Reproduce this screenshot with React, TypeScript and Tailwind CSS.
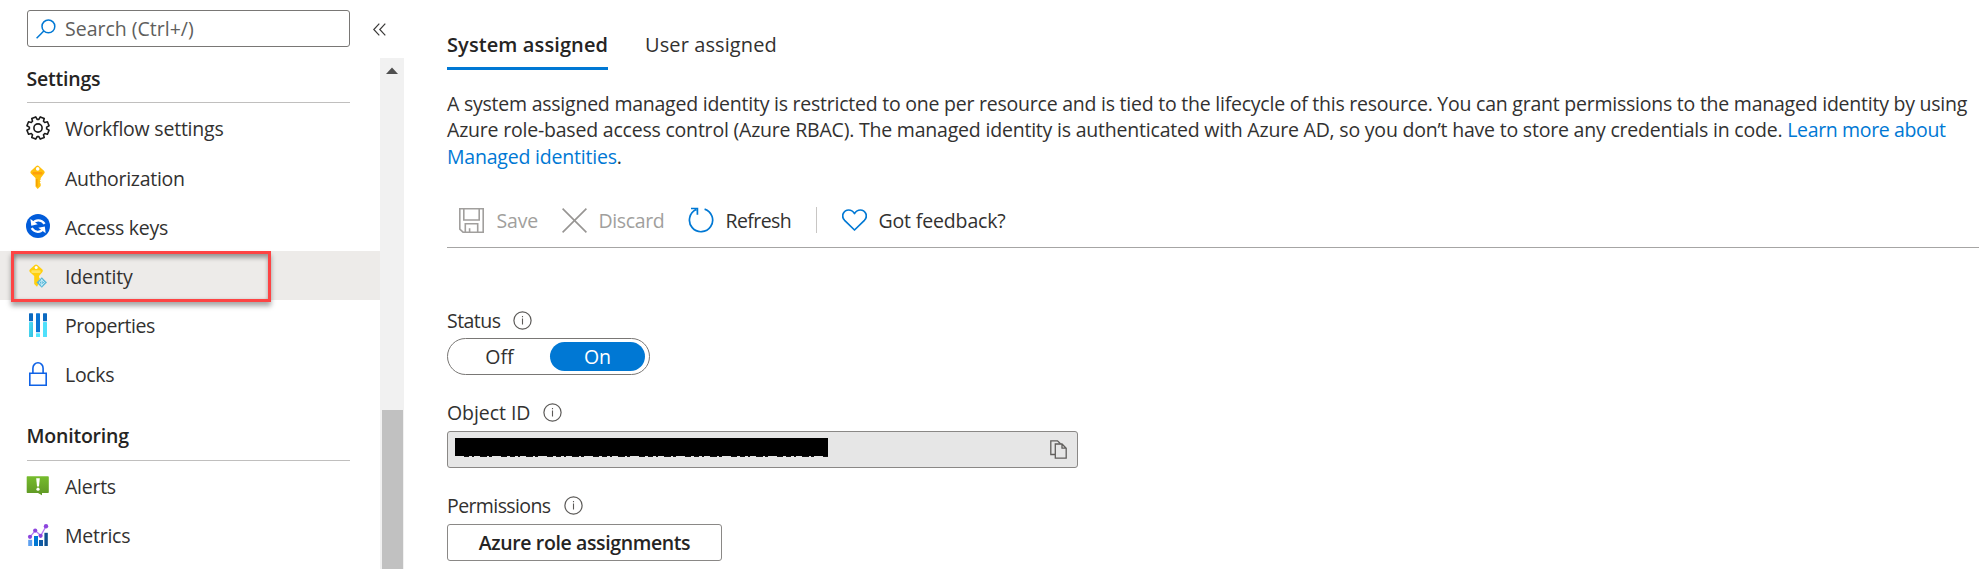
import type { ReactNode } from 'react';

const gearPath = (() => {
  const points: string[] = [];
  for (let i = 0; i < 8; i++) {
    const base = (i * Math.PI) / 4 + Math.PI / 8;
    const corners: [number, number][] = [[-0.29, 8.7], [-0.19, 11.3], [0.19, 11.3], [0.29, 8.7]];
    for (const [offset, radius] of corners) {
      const a = base + offset;
      points.push(`${(12 + radius * Math.cos(a)).toFixed(2)} ${(12 + radius * Math.sin(a)).toFixed(2)}`);
    }
  }
  return `M${points.join('L')}Z`;
})();

function GearIcon() {
  return (
    <svg className="size-6" viewBox="0 0 24 24" fill="none" stroke="#1b1b1b" strokeWidth="1.6" strokeLinejoin="round">
      <path d={gearPath} />
      <circle cx="12" cy="12" r="4.1" />
    </svg>
  );
}

function KeyIcon() {
  return (
    <svg className="size-6" viewBox="0 0 24 24">
      <path d="M11.5 0.5Q12.2 0.5 13 1.2L18.2 6Q19.3 7.2 18.2 8.5L14.7 13V14.5L13.7 15.5L14.7 16.5L13.7 17.6L14.7 18.7V21L11.7 24L9.5 21.5V13L4.9 8.5Q3.8 7.2 4.9 6L10 1.2Q10.8 .5 11.5 .5Z" fill="#ffc00d" />
      <path d="M10.2 14H11.5V22L10.2 20.8Z" fill="#f59b00" />
      <rect x="6.5" y="7" width="10" height="2.6" rx="1" fill="#ff9f0a" />
      <circle cx="11.7" cy="3.9" r="1.8" fill="#fff" />
    </svg>
  );
}

function AccessKeysIcon() {
  return (
    <svg className="size-6" viewBox="0 0 24 24">
      <circle cx="12" cy="12" r="12" fill="#015cda" />
      <g fill="none" stroke="#fff" strokeWidth="2.3">
        <path d="M6.5 9.6C9 5.6 15 4.8 18.6 9.8" />
        <path d="M17.5 14.6C15 18.6 9 19.2 5.6 14.2" />
      </g>
      <path d="M4.4 5L5.3 11.8L11.7 10.3Z" fill="#fff" />
      <path d="M19.7 19.2L18.8 12.4L12.3 13.8Z" fill="#fff" />
    </svg>
  );
}

function IdentityIcon() {
  return (
    <svg className="size-6" viewBox="0 0 24 24">
      <path d="M10 0.4Q10.7 .4 11.4 1L16.4 5.6Q17.4 6.8 16.4 8L13 12V13.6L14 14.8L13 16.2L13.6 18L11 22.8L8.2 20V12L3.8 8Q2.8 6.8 3.8 5.6L8.7 1Q9.3 .4 10 .4Z" fill="#ffcf0f" />
      <rect x="5.3" y="6.3" width="9.3" height="2.8" rx="1" fill="#ffe45c" />
      <circle cx="10.2" cy="3.6" r="1.5" fill="#fff" />
      <path d="M15.8 13.3L21 18.6L15.8 23.8L10.5 18.6Z" fill="#5ab8d8" />
      <path d="M15.8 15V22.2M13 18.6L15.8 16L18.6 18.6L15.8 21.2Z" stroke="#d6f1fa" strokeWidth="0.9" fill="none" />
    </svg>
  );
}

function PropertiesIcon() {
  return (
    <svg className="size-6" viewBox="0 0 24 24">
      <defs>
        <linearGradient id="cyanBar" x1="0" y1="0" x2="1" y2="1">
          <stop offset="0" stopColor="#50e0f8" />
          <stop offset="1" stopColor="#32bedd" />
        </linearGradient>
      </defs>
      <rect x="3" y="0.3" width="4" height="8" rx=".5" fill="#0b69c0" />
      <rect x="3" y="9" width="4" height="15" rx=".5" fill="url(#cyanBar)" />
      <rect x="10" y="0.3" width="4" height="19" rx=".5" fill="#0b74d4" />
      <rect x="10" y="20.2" width="4" height="3.8" rx=".5" fill="#50e6ff" />
      <rect x="17" y="0.3" width="4" height="8" rx=".5" fill="#0b69c0" />
      <rect x="17" y="9" width="4" height="15" rx=".5" fill="#50e0fb" />
    </svg>
  );
}

function LockIcon() {
  return (
    <svg className="size-6" viewBox="0 0 24 24" fill="none" stroke="#0f62e6" strokeWidth="1.6">
      <path d="M3.8 11.3H20.2V23.2H3.8Z" />
      <path d="M6.9 11.3V6.2A5.1 5.4 0 0 1 17.1 6.2V11.3" />
    </svg>
  );
}

function AlertsIcon() {
  return (
    <svg className="size-6" viewBox="0 0 24 24">
      <defs>
        <linearGradient id="green" x1="0" y1="0" x2="0" y2="1">
          <stop offset="0" stopColor="#76bc2d" />
          <stop offset="1" stopColor="#5e9624" />
        </linearGradient>
      </defs>
      <path d="M1.3 2.3H22Q22.8 2.3 22.8 3V18.2Q22.8 19 22 19H16V21.3L12 19H1.3Q.7 19 .7 18.2V3Q.7 2.3 1.3 2.3Z" fill="url(#green)" />
      <path d="M10.2 4.2H13.8L13 12.4H11Z" fill="#fff" />
      <circle cx="12" cy="15.2" r="1.6" fill="#fff" />
    </svg>
  );
}

function MetricsIcon() {
  return (
    <svg className="size-6" viewBox="0 0 24 24">
      <rect x="2.2" y="16.8" width="4" height="6.2" fill="#5ea0ef" />
      <rect x="8" y="13" width="4" height="10" fill="#0078d4" />
      <rect x="13" y="17" width="4" height="6" fill="#0f5ba5" />
      <rect x="18.4" y="9.8" width="3.4" height="13.2" fill="#0f5090" />
      <path d="M4 13.8L9.3 7.6L14.8 12.6L20 3.2" stroke="#b77af4" strokeWidth="1.3" fill="none" />
      <g fill="#8d45dd">
        <circle cx="4" cy="13.8" r="2.1" />
        <circle cx="9.2" cy="7.6" r="2.1" />
        <circle cx="14.6" cy="12.8" r="2.1" />
        <circle cx="20" cy="3.2" r="2.2" />
      </g>
    </svg>
  );
}

function InfoIcon() {
  return (
    <svg className="size-[19px] shrink-0" viewBox="0 0 19 19" fill="none" stroke="#5c5a58">
      <circle cx="9.5" cy="9.5" r="8.6" strokeWidth="1.2" />
      <path d="M9.5 7.6V13.4M9.5 5V6.3" strokeWidth="1.1" />
    </svg>
  );
}

function NavItem({ icon, label, tracking, active = false }: { icon: ReactNode; label: string; tracking: string; active?: boolean }) {
  return (
    <li className={`relative flex h-[49.2px] w-full items-center pl-[26px] ${active ? 'bg-[#edebe9]' : ''}`}>
      <span className="shrink-0">{icon}</span>
      <span className={`ml-[15px] pt-[2px] ${tracking}`}>{label}</span>
      {active && (
        <span className="absolute left-[11px] top-0 h-[51px] w-[260px] border-[3px] border-[#fd4444] shadow-[0_4px_5px_rgba(0,0,0,0.35),inset_0_4px_4px_rgba(0,0,0,0.32),inset_2px_0_3px_rgba(0,0,0,0.15)]" />
      )}
    </li>
  );
}

function SectionTitle({ children }: { children: ReactNode }) {
  return (
    <h2 className="ml-[26.5px] mr-[30.5px] flex h-[45px] items-start border-b border-[#c0bfbe] pt-[6.5px] font-semibold leading-[27px] tracking-[-0.2px] text-[#252423]">
      {children}
    </h2>
  );
}

function FieldLabel({ label, tracking }: { label: string; tracking: string }) {
  return (
    <div className="flex h-[27px] items-center">
      <span className={tracking}>{label}</span>
      <span className="ml-[13px]"><InfoIcon /></span>
    </div>
  );
}

export default function App() {
  return (
    <div className="flex h-[569px] w-[1979px] overflow-hidden bg-white font-['Open_Sans','Noto_Sans',sans-serif] text-[19.5px] leading-[27px] text-[#323130]">
      <aside className="flex w-[404px] shrink-0 flex-col">
        <div className="flex h-[58px] items-start pl-[27px] pt-[10px]">
          <div className="flex h-[37px] w-[323px] items-center rounded-[3px] border border-[#797775] pl-[8px]">
            <svg className="size-5" viewBox="0 0 20 20" fill="none" stroke="#0078d4" strokeWidth="1.5">
              <circle cx="12.4" cy="7.4" r="6.4" />
              <path d="M7.8 12L.6 19.2" />
            </svg>
            <span className="ml-[9px] text-[#605e5c]">Search (Ctrl+/)</span>
          </div>
          <svg className="ml-[23px] mt-[13px] h-[13px] w-[13px]" viewBox="0 0 13 13" fill="none" stroke="#3b3a39" strokeWidth="1.2">
            <path d="M6.3 .7L.8 6.5L6.3 12.3M12.3 .7L6.8 6.5L12.3 12.3" />
          </svg>
        </div>
        <div className="flex min-h-0 flex-1">
          <nav className="w-[380px]">
            <SectionTitle>Settings</SectionTitle>
            <ul className="pt-[0.4px]">
              <NavItem icon={<GearIcon />} label="Workflow settings" tracking="tracking-[-0.22px]" />
              <NavItem icon={<KeyIcon />} label="Authorization" tracking="tracking-[-0.28px]" />
              <NavItem icon={<AccessKeysIcon />} label="Access keys" tracking="tracking-[-0.26px]" />
              <NavItem icon={<IdentityIcon />} label="Identity" tracking="tracking-[-0.15px]" active />
              <NavItem icon={<PropertiesIcon />} label="Properties" tracking="tracking-[-0.45px]" />
              <NavItem icon={<LockIcon />} label="Locks" tracking="tracking-[-0.3px]" />
            </ul>
            <div className="pt-[17.4px]">
              <SectionTitle>Monitoring</SectionTitle>
            </div>
            <ul>
              <NavItem icon={<AlertsIcon />} label="Alerts" tracking="tracking-[-0.25px]" />
              <NavItem icon={<MetricsIcon />} label="Metrics" tracking="tracking-[-0.25px]" />
            </ul>
          </nav>
          <div className="flex w-[24px] flex-col items-center bg-[#f1f1f1]">
            <svg className="mt-[9px] h-[7px] w-[12px]" viewBox="0 0 12 7"><path d="M0 7L6 .5L12 7Z" fill="#505050" /></svg>
            <div className="mt-[336px] w-[21px] flex-1 bg-[#c1c1c1]" />
          </div>
        </div>
      </aside>

      <main className="flex w-[1575px] flex-col pl-[43px] pt-[31px]">
        <div className="flex gap-[37px] text-[20px]">
          <div className="h-[39px] w-[161px] whitespace-nowrap border-b-[3px] border-[#0078d4] font-semibold tracking-[0.1px] text-[#252423]">System assigned</div>
          <div className="tracking-[0.1px]">User assigned</div>
        </div>
        <p className="mt-[20.6px] whitespace-nowrap leading-[26.6px]">
          <span className="block tracking-[-0.235px]">A system assigned managed identity is restricted to one per resource and is tied to the lifecycle of this resource. You can grant permissions to the managed identity by using</span>
          <span className="block tracking-[-0.205px]">Azure role-based access control (Azure RBAC). The managed identity is authenticated with Azure AD, so you don’t have to store any credentials in code. <a className="tracking-[-0.36px] text-[#0078d4]">Learn more about</a></span>
          <span className="block tracking-[-0.2px]"><a className="text-[#0078d4]">Managed identities</a>.</span>
        </p>
        <div className="mt-[23.4px] flex h-[54px] items-center border-b border-[#a6a5a4] pl-[12px]">
          <svg className="size-[25px]" viewBox="0 0 25 25" fill="none" stroke="#a19f9d" strokeWidth="1.6">
            <path d="M.8 .8H24.2V24.2H4L.8 21.2ZM4.8 .8V12H20.2V.8M6.3 24.2V15.8H18.7V24.2M10.6 24.2V20.2" />
          </svg>
          <span className="ml-[12.5px] w-[65.5px] tracking-[-0.15px] text-[#a19f9d]">Save</span>
          <svg className="size-[25px]" viewBox="0 0 25 25" fill="none" stroke="#979593" strokeWidth="1.6">
            <path d="M.6 .6L24.4 24.4M24.4 .6L.6 24.4" />
          </svg>
          <span className="ml-[11.5px] w-[89.5px] tracking-[-0.37px] text-[#a19f9d]">Discard</span>
          <svg className="size-[26px]" viewBox="0 0 26 26" fill="none" stroke="#0078d4" strokeWidth="1.7">
            <path d="M16.6 2.1A11.6 11.6 0 1 1 8.2 2.6M3 1.5H9.4V7.8" />
          </svg>
          <span className="ml-[11.5px] w-[90.5px] tracking-[-0.58px]">Refresh</span>
          <div className="h-[26px] w-px bg-[#c8c6c4]" />
          <svg className="ml-[25px] h-[22px] w-[25px]" viewBox="0 0 25 22" fill="none" stroke="#0078d4" strokeWidth="1.7" strokeLinejoin="round">
            <path d="M12.5 21L2.6 11.3C-1.6 6.6 2 1 6.6 1C9.4 1 11.2 2.5 12.5 4.6C13.8 2.5 15.6 1 18.4 1C23 1 26.6 6.6 22.4 11.3Z" />
          </svg>
          <span className="ml-[11.5px] tracking-[-0.15px]">Got feedback?</span>
        </div>

        <div className="mt-[59px]">
          <FieldLabel label="Status" tracking="tracking-[-0.55px]" />
          <div className="mt-[4px] flex h-[37px] w-[203px] items-center rounded-full border-[1.5px] border-[#797775] pl-[2px] pr-[4px]">
            <span className="w-[100px] pr-px text-center">Off</span>
            <span className="flex h-[29px] flex-1 items-center justify-center rounded-full bg-[#0078d4] text-white">On</span>
          </div>
        </div>
        <div className="mt-[24.4px]">
          <FieldLabel label="Object ID" tracking="tracking-[-0.05px]" />
          <div className="mt-[4.6px] flex h-[37px] w-[631px] items-center justify-between rounded-[3px] border border-[#8a8886] bg-[#e6e6e6] pl-[7px] pr-[10px]">
            <div className="mb-[3px] flex h-[19px] w-[373px] flex-col">
              <div className="h-[17.5px] bg-black" />
              <svg className="h-[1.5px] w-full" viewBox="0 0 373 1.5" preserveAspectRatio="none">
                <path d="M9 .75H373" stroke="#111" strokeWidth="1.5" strokeDasharray="5 3 2 6 7 2 3 9 6 3" />
              </svg>
            </div>
            <svg className="h-[19px] w-[17px]" viewBox="0 0 17 19" fill="none" stroke="#605e5c" strokeWidth="1.3">
              <path d="M5 14.5H.8V.8H7.5L10.5 3.8" />
              <path d="M5.3 4H12L16.2 8.2V18.2H5.3ZM12 4V8.2H16.2" />
            </svg>
          </div>
        </div>
        <div className="mt-[24.4px]">
          <FieldLabel label="Permissions" tracking="tracking-[-0.6px]" />
          <button className="mt-[4.6px] flex h-[37px] w-[275px] items-center justify-center rounded-[3px] border border-[#8a8886] font-semibold tracking-[-0.38px] text-[#252423]">Azure role assignments</button>
        </div>
      </main>
    </div>
  );
}
